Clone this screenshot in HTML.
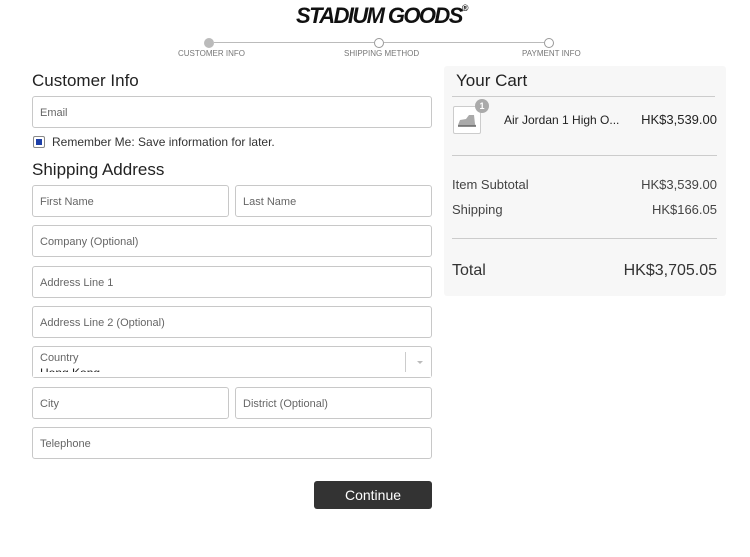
<!DOCTYPE html>
<html><head><meta charset="utf-8"><style>
*{margin:0;padding:0;box-sizing:border-box}
body{width:750px;height:557px;background:#fff;font-family:"Liberation Sans",Arial,sans-serif;color:#222;position:relative;overflow:hidden}
.a{position:absolute}
.in{position:absolute;border:1px solid #c8c8c8;border-radius:3px;height:32px;font-size:11px;color:#666;padding-left:7px;line-height:32px;background:#fff}
.h{position:absolute;font-size:17px;color:#222}
.step{position:absolute;font-size:8px;color:#777;top:49px}
.dot{position:absolute;width:10px;height:10px;border-radius:50%;border:1px solid #999;top:38px;background:#fff}
.ln{position:absolute;height:1px;background:#bbb;top:42px}
</style></head><body>
<div class="a" style="left:296px;top:3px;font-size:22px;font-weight:900;font-style:italic;letter-spacing:-1.6px;color:#111">STADIUM GOODS<span style="font-size:9px;vertical-align:top;letter-spacing:0">®</span></div>
<div class="ln" style="left:214px;width:160px"></div>
<div class="ln" style="left:384px;width:160px"></div>
<div class="dot" style="left:204px;background:#bbb;border-color:#bbb"></div>
<div class="dot" style="left:374px"></div>
<div class="dot" style="left:544px"></div>
<div class="step" style="left:178px">CUSTOMER INFO</div>
<div class="step" style="left:344px">SHIPPING METHOD</div>
<div class="step" style="left:522px">PAYMENT INFO</div>

<div class="h" style="left:32px;top:71px">Customer Info</div>
<div class="in" style="left:32px;top:96px;width:400px">Email</div>
<div class="a" style="left:33px;top:136px;width:12px;height:12px;border:1px solid #888;border-radius:2px;background:#fff"><div style="margin:2px;width:6px;height:6px;background:#1d3fa8"></div></div>
<div class="a" style="left:52px;top:135px;font-size:12px;color:#333">Remember Me: Save information for later.</div>
<div class="h" style="left:32px;top:160px">Shipping Address</div>
<div class="in" style="left:32px;top:185px;width:197px">First Name</div>
<div class="in" style="left:235px;top:185px;width:197px">Last Name</div>
<div class="in" style="left:32px;top:225px;width:400px">Company (Optional)</div>
<div class="in" style="left:32px;top:266px;width:400px">Address Line 1</div>
<div class="in" style="left:32px;top:306px;width:400px">Address Line 2 (Optional)</div>
<div class="in" style="left:32px;top:346px;width:400px;overflow:hidden;line-height:normal">
<div style="position:absolute;left:7px;top:5px;font-size:11px;color:#666">Country</div>
<div style="position:absolute;left:7px;top:19px;font-size:12px;color:#222">Hong Kong</div>
<div style="position:absolute;left:372px;top:5px;width:1px;height:20px;background:#ccc"></div>
<div style="position:absolute;left:384px;top:14px;border-left:3px solid transparent;border-right:3px solid transparent;border-top:3px solid #bbb"></div>
</div>
<div class="a" style="left:33px;top:372px;width:398px;height:5px;background:#fff"></div>
<div class="in" style="left:32px;top:387px;width:197px">City</div>
<div class="in" style="left:235px;top:387px;width:197px">District (Optional)</div>
<div class="in" style="left:32px;top:427px;width:400px">Telephone</div>
<div class="a" style="left:314px;top:481px;width:118px;height:28px;background:#333;border-radius:3px;color:#fff;font-size:14px;text-align:center;line-height:28px">Continue</div>

<div class="a" style="left:444px;top:66px;width:282px;height:230px;background:#f7f7f7;border-radius:3px">
<div class="a" style="left:12px;top:5px;font-size:17px">Your Cart</div>
<div class="a" style="left:8px;top:30px;width:263px;height:1px;background:#ccc"></div>
<div class="a" style="left:9px;top:40px;width:28px;height:28px;border:1px solid #ccc;border-radius:2px;background:#fff">
<svg width="26" height="26" viewBox="0 0 26 26"><path d="M4 18 L6 13 L12 12 L15 8 L20 8 L21 17 L22 19 L4 19Z" fill="#aaa"/><path d="M4 19 L22 19" stroke="#666" stroke-width="1.5"/></svg></div>
<div class="a" style="left:31px;top:33px;width:14px;height:14px;border-radius:50%;background:#aaa;color:#fff;font-size:9px;text-align:center;line-height:14px;font-weight:bold">1</div>
<div class="a" style="left:60px;top:47px;font-size:12px">Air Jordan 1 High O...</div>
<div class="a" style="right:9px;top:46px;font-size:13px">HK$3,539.00</div>
<div class="a" style="left:8px;top:89px;width:265px;height:1px;background:#ccc"></div>
<div class="a" style="left:8px;top:111px;font-size:13px;color:#444">Item Subtotal</div>
<div class="a" style="right:9px;top:111px;font-size:13px;color:#444">HK$3,539.00</div>
<div class="a" style="left:8px;top:136px;font-size:13px;color:#444">Shipping</div>
<div class="a" style="right:9px;top:136px;font-size:13px;color:#444">HK$166.05</div>
<div class="a" style="left:8px;top:172px;width:265px;height:1px;background:#ccc"></div>
<div class="a" style="left:8px;top:196px;font-size:16px;color:#333">Total</div>
<div class="a" style="right:9px;top:196px;font-size:16px;color:#333">HK$3,705.05</div>
</div>
</body></html>
